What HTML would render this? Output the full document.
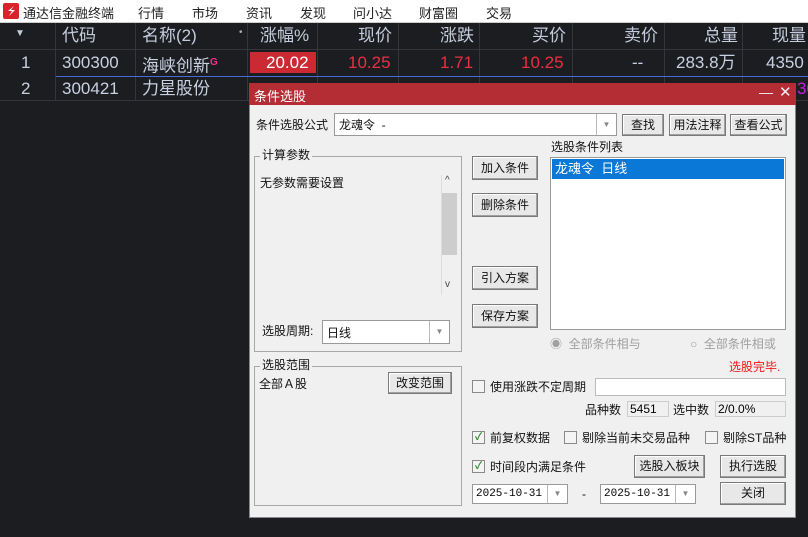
<!DOCTYPE html>
<html><head><meta charset="utf-8"><style>
*{margin:0;padding:0;box-sizing:border-box}
body{width:808px;height:537px;overflow:hidden;background:#1c1d21;font-family:"Liberation Sans","Noto Sans CJK SC",sans-serif;position:relative}
.a{position:absolute;white-space:nowrap}
#menu{left:0;top:0;width:808px;height:23px;background:#fff;border-bottom:1px solid #ccc;font-size:13px;color:#222}
.hd{font-size:17px;color:#c4ccdc;text-align:right;line-height:22px}
.vl{position:absolute;top:23px;height:77px;width:1px;background:#34363c}
.hl{position:absolute;left:0;width:808px;height:1px;background:#34363c}
.cell{font-size:17px;color:#c8d0e2;line-height:22px;height:22px}
.red{color:#ec2e42}
#dlg{left:249px;top:83px;width:547px;height:435px;background:#f0f0f0;border:1px solid #888;border-top:none}
#tb{left:249px;top:83px;width:547px;height:22px;background:#b52d34;color:#fff;font-size:13px}
.t{font-size:12px;color:#111;line-height:15px}
.btn{position:absolute;background:#e8e8e8;border:1px solid #7a7a7a;box-shadow:inset -1px -1px 0 #a0a0a0,inset 1px 1px 0 #fff;font-size:12px;color:#111;text-align:center;white-space:nowrap}
.box{position:absolute;background:#fff;border:1px solid #999}
.grp{position:absolute;border:1px solid #a8a8a8}
.cb{position:absolute;width:13px;height:13px;border:1px solid #8a8a8a;background:#f4f4f4;font-size:10px;color:#2a8a2a;line-height:11px;text-align:center;font-weight:bold}
.dd{position:absolute;top:0;right:0;width:20px;height:100%;border-left:1px solid #bbb;color:#888;font-size:8px;text-align:center}
</style></head><body>
<div id="menu" class="a">
<div class="a" style="left:3px;top:3px;width:16px;height:16px;background:#d9232b;border-radius:2px"><svg width="16" height="16"><path d="M11 3 L5 8 L9 8 L6 13 L12 7 L8 7 Z" fill="#fff"/></svg></div>
<span class="a" style="left:23px;top:3px">通达信金融终端</span>
<span class="a" style="left:138px;top:3px">行情</span>
<span class="a" style="left:192px;top:3px">市场</span>
<span class="a" style="left:246px;top:3px">资讯</span>
<span class="a" style="left:300px;top:3px">发现</span>
<span class="a" style="left:353px;top:3px">问小达</span>
<span class="a" style="left:419px;top:3px">财富圈</span>
<span class="a" style="left:486px;top:3px">交易</span>
</div>
<div class="vl" style="left:55px"></div><div class="vl" style="left:135px"></div><div class="vl" style="left:247px"></div><div class="vl" style="left:317px"></div><div class="vl" style="left:398px"></div><div class="vl" style="left:479px"></div><div class="vl" style="left:572px"></div><div class="vl" style="left:664px"></div><div class="vl" style="left:742px"></div>
<div class="hl" style="top:49px"></div><div class="hl" style="top:100px"></div>
<div class="a" style="left:56px;top:76px;width:752px;height:1px;background:#4a6ad8"></div>
<span class="a" style="left:15px;top:28px;color:#c4ccdc;font-size:10px">▼</span>
<span class="a hd" style="left:62px;top:25px">代码</span>
<span class="a hd" style="left:142px;top:25px">名称(2)</span>
<span class="a" style="left:239px;top:27px;color:#aaa;font-size:10px">•</span>
<span class="a hd" style="left:260px;top:25px">涨幅%</span>
<span class="a hd" style="left:358px;top:25px">现价</span>
<span class="a hd" style="left:440px;top:25px">涨跌</span>
<span class="a hd" style="left:532px;top:25px">买价</span>
<span class="a hd" style="left:624px;top:25px">卖价</span>
<span class="a hd" style="left:704px;top:25px">总量</span>
<span class="a hd" style="left:772px;top:25px">现量</span>
<span class="a cell" style="left:21px;top:52px">1</span>
<span class="a cell" style="left:62px;top:52px">300300</span>
<span class="a cell" style="left:142px;top:52px">海峡创新<sup style="color:#ff2a8a;font-size:10px;font-weight:bold">G</sup></span>
<div class="a" style="left:250px;top:52px;width:66px;height:21px;background:#cc2a32"></div>
<span class="a cell" style="left:266px;top:52px;color:#fff">20.02</span>
<span class="a cell red" style="left:348px;top:52px">10.25</span>
<span class="a cell red" style="left:440px;top:52px">1.71</span>
<span class="a cell red" style="left:521px;top:52px">10.25</span>
<span class="a cell" style="left:632px;top:52px">--</span>
<span class="a cell" style="left:676px;top:52px">283.8万</span>
<span class="a cell" style="left:766px;top:52px">4350</span>
<span class="a cell" style="left:21px;top:78px">2</span>
<span class="a cell" style="left:62px;top:78px">300421</span>
<span class="a cell" style="left:142px;top:78px">力星股份</span>
<span class="a cell" style="left:797px;top:78px;color:#c020e0">30</span>

<div id="dlg" class="a"></div>
<div id="tb" class="a"><span class="a" style="left:5px;top:3px">条件选股</span><span class="a" style="left:510px;top:1px;font-size:14px;color:#eee">—</span><span class="a" style="left:530px;top:0px;font-size:15px;color:#eee">✕</span></div>

<span class="a t" style="left:256px;top:118px">条件选股公式</span>
<div class="box" style="left:334px;top:113px;width:283px;height:23px"><span class="a t" style="left:4px;top:4px">龙魂令 &nbsp;-</span><div class="dd" style="line-height:21px">▼</div></div>
<div class="btn" style="left:622px;top:114px;width:42px;height:22px;line-height:20px">查找</div>
<div class="btn" style="left:669px;top:114px;width:57px;height:22px;line-height:20px">用法注释</div>
<div class="btn" style="left:730px;top:114px;width:57px;height:22px;line-height:20px">查看公式</div>

<div class="grp" style="left:254px;top:156px;width:208px;height:196px"></div>
<span class="a t" style="left:260px;top:148px;background:#f0f0f0;padding:0 2px">计算参数</span>
<span class="a t" style="left:260px;top:176px">无参数需要设置</span>
<div class="a" style="left:441px;top:175px;width:16px;height:120px;border-left:1px solid #ddd"><div class="a" style="left:0;top:18px;width:15px;height:62px;background:#cdcdcd"></div><span class="a" style="left:3px;top:0;font-size:10px;color:#444">^</span><span class="a" style="left:3px;top:104px;font-size:10px;color:#444">v</span></div>
<span class="a t" style="left:262px;top:324px">选股周期:</span>
<div class="box" style="left:322px;top:320px;width:128px;height:24px"><span class="a t" style="left:4px;top:5px">日线</span><div class="dd" style="line-height:22px">▼</div></div>

<div class="grp" style="left:254px;top:366px;width:208px;height:140px"></div>
<span class="a t" style="left:260px;top:358px;background:#f0f0f0;padding:0 2px">选股范围</span>
<span class="a t" style="left:259px;top:377px">全部Ａ股</span>
<div class="btn" style="left:388px;top:372px;width:64px;height:22px;line-height:20px">改变范围</div>

<div class="btn" style="left:472px;top:156px;width:66px;height:24px;line-height:22px">加入条件</div>
<div class="btn" style="left:472px;top:193px;width:66px;height:24px;line-height:22px">删除条件</div>
<div class="btn" style="left:472px;top:266px;width:66px;height:24px;line-height:22px">引入方案</div>
<div class="btn" style="left:472px;top:304px;width:66px;height:24px;line-height:22px">保存方案</div>

<span class="a t" style="left:551px;top:140px">选股条件列表</span>
<div class="box" style="left:550px;top:157px;width:236px;height:173px"><div class="a" style="left:1px;top:1px;width:232px;height:20px;background:#0a78d7;color:#fff;font-size:13px;line-height:20px;padding-left:3px">龙魂令 &nbsp;日线</div></div>
<span class="a t" style="left:550px;top:337px;color:#a0a0a0">◉ &nbsp;全部条件相与</span>
<span class="a t" style="left:690px;top:337px;color:#a0a0a0">○ &nbsp;全部条件相或</span>
<span class="a t" style="left:729px;top:360px;color:#f01818">选股完毕.</span>

<div class="cb" style="left:472px;top:380px"></div>
<span class="a t" style="left:490px;top:380px">使用涨跌不定周期</span>
<div class="box" style="left:595px;top:378px;width:191px;height:18px;border-color:#bbb"></div>
<span class="a t" style="left:585px;top:403px">品种数</span>
<div class="a" style="left:627px;top:401px;width:42px;height:16px;border:1px solid #ccc;font-size:12px;padding-left:2px">5451</div>
<span class="a t" style="left:673px;top:403px">选中数</span>
<div class="a" style="left:715px;top:401px;width:71px;height:16px;border:1px solid #ccc;font-size:12px;padding-left:2px">2/0.0%</div>

<div class="cb" style="left:472px;top:431px">✓</div>
<span class="a t" style="left:490px;top:431px">前复权数据</span>
<div class="cb" style="left:564px;top:431px"></div>
<span class="a t" style="left:582px;top:431px">剔除当前未交易品种</span>
<div class="cb" style="left:705px;top:431px"></div>
<span class="a t" style="left:723px;top:431px">剔除ST品种</span>

<div class="cb" style="left:472px;top:460px">✓</div>
<span class="a t" style="left:490px;top:460px">时间段内满足条件</span>
<div class="btn" style="left:634px;top:455px;width:71px;height:23px;line-height:21px">选股入板块</div>
<div class="btn" style="left:720px;top:455px;width:66px;height:23px;line-height:21px">执行选股</div>
<div class="box" style="left:472px;top:484px;width:96px;height:20px"><span class="a" style="left:3px;top:3px;font-size:11px;font-family:'Liberation Mono',monospace">2025-10-31</span><div class="dd" style="line-height:18px">▼</div></div>
<span class="a t" style="left:582px;top:487px">-</span>
<div class="box" style="left:600px;top:484px;width:96px;height:20px"><span class="a" style="left:3px;top:3px;font-size:11px;font-family:'Liberation Mono',monospace">2025-10-31</span><div class="dd" style="line-height:18px">▼</div></div>
<div class="btn" style="left:720px;top:482px;width:66px;height:23px;line-height:21px">关闭</div>
</body></html>
